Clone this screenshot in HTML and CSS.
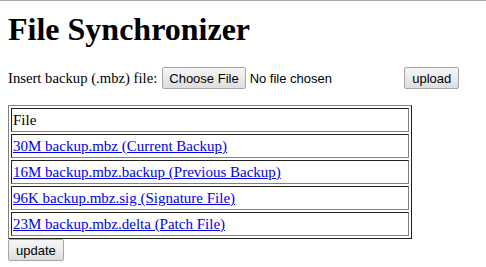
FILE: index.html
```html
<!DOCTYPE html>
<html>
<head>
<meta charset="utf-8">
<link rel="stylesheet" href="styles.css">
</head>
<body>
<div class="topline"></div>
<h1 class="title">File Synchronizer</h1>
<form class="upload-form">
  <span class="label">Insert backup (.mbz) file:</span>
  <input class="file" type="file" name="backup">
  <button class="btn" type="button">upload</button>
</form>
<table class="files">
  <tr><td>File</td></tr>
  <tr><td><a href="#">30M backup.mbz (Current Backup)</a></td></tr>
  <tr><td><a href="#">16M backup.mbz.backup (Previous Backup)</a></td></tr>
  <tr><td><a href="#">96K backup.mbz.sig (Signature File)</a></td></tr>
  <tr><td><a href="#">23M backup.mbz.delta (Patch File)</a></td></tr>
</table>
<button class="btn update" type="button">update</button>
</body>
</html>
```
FILE: styles.css
```css
html, body {
  margin: 0;
  padding: 0;
  background: #fff;
}
body {
  font-family: "Liberation Serif", "Times New Roman", serif;
  font-size: 14.7px;
  color: #000;
  padding: 0 8px;
}
.topline {
  height: 1px;
  background: #a8a8a8;
  margin: 0 -8px;
}
.title {
  font-size: 32px;
  font-weight: bold;
  margin: 10px 0 0;
  line-height: 37px;
}
.upload-form {
  display: flex;
  align-items: center;
  margin-top: 19px;
  height: 22px;
}
.label {
  margin-right: 5px;
}
.file {
  font-family: "Liberation Sans", Arial, sans-serif;
  font-size: 13px;
  width: 242px;
  margin: 0;
}
.file::file-selector-button {
  font-family: "Liberation Sans", Arial, sans-serif;
  font-size: 13px;
  height: 22px;
  padding: 0 6px;
  margin-right: 4px;
  border: 1px solid #a6a6a6;
  border-radius: 2px;
  background: linear-gradient(#f6f6f6, #dedede);
  color: #000;
}
.btn {
  font-family: "Liberation Sans", Arial, sans-serif;
  font-size: 13px;
  height: 22px;
  padding: 0 7px;
  border: 1px solid #a6a6a6;
  border-radius: 2px;
  background: linear-gradient(#f6f6f6, #dedede);
  color: #000;
  margin: 0;
}
.files {
  margin-top: 16px;
  width: 404px;
  border: 1px solid;
  border-color: #808080 #202020 #202020 #808080;
  border-spacing: 2px;
  font-size: 15px;
}
.files td {
  border: 1px solid;
  border-color: #202020 #808080 #808080 #202020;
  padding: 2px 1px;
  height: 18px;
  line-height: 18px;
}
.files a {
  color: #0000ee;
}
.update {
  display: block;
  margin-top: 0;
}
```
